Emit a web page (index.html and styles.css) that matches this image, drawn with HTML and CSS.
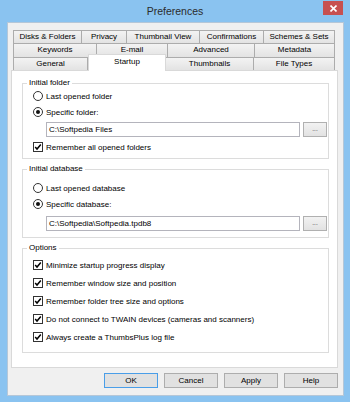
FILE: index.html
```html
<!DOCTYPE html>
<html lang="en">
<head>
  <meta charset="UTF-8">
  <title>Preferences</title>
  <link rel="stylesheet" href="styles.css">
</head>
<body>
  <div class="window">
    <div class="titlebar">
      <span></span>
      <span class="title">Preferences</span>
      <span class="close-wrap">
        <span class="close">
          <svg width="7" height="7" viewBox="0 0 7 7"><path d="M0.5 0.5 L6.5 6.5 M6.5 0.5 L0.5 6.5" stroke="#fff" stroke-width="1.6"/></svg>
        </span>
      </span>
    </div>

    <div class="client">
      <div class="tabs">
        <div class="tab-row row1">
          <div class="tab">Disks &amp; Folders</div>
          <div class="tab">Privacy</div>
          <div class="tab">Thumbnail View</div>
          <div class="tab">Confirmations</div>
          <div class="tab">Schemes &amp; Sets</div>
        </div>
        <div class="tab-row row2">
          <div class="tab">Keywords</div>
          <div class="tab">E-mail</div>
          <div class="tab">Advanced</div>
          <div class="tab">Metadata</div>
        </div>
        <div class="tab-row row3">
          <div class="tab">General</div>
          <div class="tab active">Startup</div>
          <div class="tab">Thumbnails</div>
          <div class="tab">File Types</div>
        </div>
      </div>

      <div class="panel">
        <fieldset class="group g-folder">
          <legend>Initial folder</legend>
          <div class="opt first"><span class="radio"></span>Last opened folder</div>
          <div class="opt"><span class="radio on"></span>Specific folder:</div>
          <div class="path-row">
            <div class="path">C:\Softpedia Files</div>
            <div class="browse">...</div>
          </div>
          <div class="opt check-row"><span class="check on"><svg width="8" height="8" viewBox="0 0 8 8"><path d="M1.2 4 L3 6 L6.8 1.5" fill="none" stroke="#000" stroke-width="1.5"/></svg></span>Remember all opened folders</div>
        </fieldset>

        <fieldset class="group g-db">
          <legend>Initial database</legend>
          <div class="opt first"><span class="radio"></span>Last opened database</div>
          <div class="opt"><span class="radio on"></span>Specific database:</div>
          <div class="path-row">
            <div class="path">C:\Softpedia\Softpedia.tpdb8</div>
            <div class="browse">...</div>
          </div>
        </fieldset>

        <fieldset class="group g-options">
          <legend>Options</legend>
          <div class="opt tall first"><span class="check on"><svg width="8" height="8" viewBox="0 0 8 8"><path d="M1.2 4 L3 6 L6.8 1.5" fill="none" stroke="#000" stroke-width="1.5"/></svg></span>Minimize startup progress display</div>
          <div class="opt tall"><span class="check on"><svg width="8" height="8" viewBox="0 0 8 8"><path d="M1.2 4 L3 6 L6.8 1.5" fill="none" stroke="#000" stroke-width="1.5"/></svg></span>Remember window size and position</div>
          <div class="opt tall"><span class="check on"><svg width="8" height="8" viewBox="0 0 8 8"><path d="M1.2 4 L3 6 L6.8 1.5" fill="none" stroke="#000" stroke-width="1.5"/></svg></span>Remember folder tree size and options</div>
          <div class="opt tall"><span class="check on"><svg width="8" height="8" viewBox="0 0 8 8"><path d="M1.2 4 L3 6 L6.8 1.5" fill="none" stroke="#000" stroke-width="1.5"/></svg></span>Do not connect to TWAIN devices (cameras and scanners)</div>
          <div class="opt tall"><span class="check on"><svg width="8" height="8" viewBox="0 0 8 8"><path d="M1.2 4 L3 6 L6.8 1.5" fill="none" stroke="#000" stroke-width="1.5"/></svg></span>Always create a ThumbsPlus log file</div>
        </fieldset>
      </div>

      <div class="buttons">
        <button class="btn default">OK</button>
        <button class="btn">Cancel</button>
        <button class="btn">Apply</button>
        <button class="btn">Help</button>
      </div>
    </div>
  </div>
</body>
</html>
```

FILE: styles.css
```css
body {
  margin: 0;
  font-family: "Liberation Sans", Arial, sans-serif;
  font-size: 8px;
  color: #000;
}
.window {
  width: 350px;
  height: 402px;
  background: #8ac3f0;
  display: flex;
  flex-direction: column;
}
.titlebar {
  height: 22px;
  display: grid;
  grid-template-columns: 1fr auto 1fr;
  align-items: start;
}
.title {
  font-size: 10.5px;
  line-height: 23px;
  color: #2b2b2b;
}
.close-wrap {
  display: flex;
  justify-content: flex-end;
  padding: 1px 7px 0 0;
}
.close {
  width: 20px;
  height: 14px;
  background: #c75050;
  display: flex;
  align-items: center;
  justify-content: center;
}
.client {
  flex: 1;
  margin: 0 6px 6px 7px;
  background: #f0f0f0;
  border: 1px solid #b5c7d8;
  padding: 7px 5px 0 3px;
  display: flex;
  flex-direction: column;
}

/* tabs */
.tabs {
  padding: 0 2px;
}
.tab-row {
  display: flex;
  height: 13px;
}
.tab-row.row2 {
  height: 14px;
}
.tab-row.row3 {
  align-items: flex-end;
}
.tab {
  box-sizing: border-box;
  height: 100%;
  border: 1px solid #acacac;
  border-left: none;
  border-bottom: none;
  background: linear-gradient(#f3f3f3, #e3e3e3);
  text-align: center;
  line-height: 12px;
  white-space: nowrap;
}
.tab:first-child {
  border-left: 1px solid #acacac;
}
.tab.active {
  height: 17px;
  margin-bottom: -1px;
  background: #fff;
  border: 1px solid #d9d9d9;
  border-bottom: none;
  line-height: 13px;
  position: relative;
  z-index: 1;
}
.row1 .tab:nth-child(1) { width: 69px; }
.row1 .tab:nth-child(2) { width: 45px; }
.row1 .tab:nth-child(3) { width: 73px; }
.row1 .tab:nth-child(4) { width: 64px; }
.row1 .tab:nth-child(5) { width: 71px; }
.row2 .tab:nth-child(1) { width: 84px; }
.row2 .tab:nth-child(2) { width: 71px; }
.row2 .tab:nth-child(3) { width: 87px; }
.row2 .tab:nth-child(4) { width: 80px; }
.row3 .tab:nth-child(1) { width: 75px; }
.row3 .tab:nth-child(2) { width: 78px; }
.row3 .tab:nth-child(3) { width: 88px; }
.row3 .tab:nth-child(4) { width: 81px; }

/* page */
.panel {
  background: #fff;
  border: 1px solid #d9d9d9;
  height: 298px;
  box-sizing: border-box;
  padding: 6px 8px 0 10px;
}
.group {
  margin: 0;
  border: 1px solid #dcdcdc;
  padding: 0 0 0 10px;
  min-width: 0;
}
.group + .group {
  margin-top: 4px;
}
.group legend {
  padding: 0 2px;
  margin-left: -6px;
  line-height: 12px;
}
.g-folder { padding-bottom: 3px; }
.g-db { padding-bottom: 6px; }
.g-options { padding-bottom: 6px; }
.g-folder .first { margin-top: -1px; }
.g-db .first { margin-top: 5px; }
.g-options .first { margin-top: 2px; }

.opt {
  display: flex;
  align-items: center;
  gap: 3px;
  height: 16px;
  white-space: nowrap;
}
.opt.tall {
  height: 18px;
}
.check-row {
  margin-top: 2px;
}
.radio {
  box-sizing: border-box;
  width: 10px;
  height: 10px;
  border: 1px solid #333;
  border-radius: 50%;
  background: #fff;
  display: flex;
  align-items: center;
  justify-content: center;
}
.radio.on::after {
  content: "";
  width: 4px;
  height: 4px;
  border-radius: 50%;
  background: #111;
}
.check {
  box-sizing: border-box;
  width: 10px;
  height: 10px;
  border: 1px solid #333;
  background: #fff;
  display: flex;
  align-items: center;
  justify-content: center;
}
.path-row {
  display: flex;
  gap: 3px;
  margin: 2px 1px 0 13px;
  height: 15px;
}
.g-db .path-row {
  margin-top: 4px;
}
.path {
  flex: 1;
  box-sizing: border-box;
  border: 1px solid #b4b4bc;
  background: #fff;
  padding-left: 2px;
  line-height: 13px;
}
.browse {
  box-sizing: border-box;
  width: 24px;
  border: 1px solid #b0b0b0;
  background: linear-gradient(#f2f2f2, #e2e2e2);
  text-align: center;
  line-height: 12px;
  font-size: 6.5px;
  color: #444;
}

/* dialog buttons */
.buttons {
  display: flex;
  justify-content: flex-end;
  gap: 6px;
  margin-top: 5px;
}
.btn {
  width: 54px;
  height: 15px;
  padding: 0;
  font-family: inherit;
  font-size: 8px;
  color: #000;
  background: #e1e1e1;
  border: 1px solid #adadad;
}
.btn.default {
  border-color: #4a9ee8;
}
```
